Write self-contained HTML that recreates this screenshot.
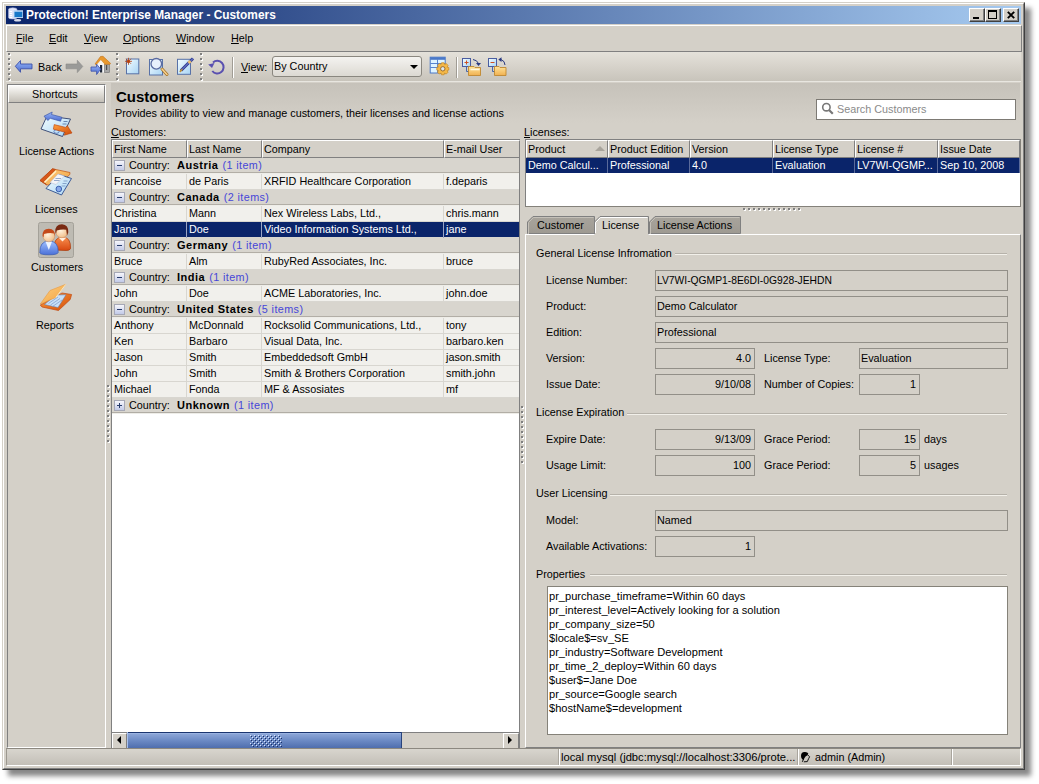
<!DOCTYPE html>
<html><head><meta charset="utf-8">
<style>
html,body{margin:0;padding:0;}
body{width:1039px;height:784px;position:relative;overflow:hidden;background:#fff;font-family:"Liberation Sans",sans-serif;font-size:10.8px;color:#000;}
.a{position:absolute;box-sizing:border-box;}
.t{position:absolute;white-space:pre;line-height:12px;font-size:10.8px;}
.b{font-weight:bold;}
.w{color:#fff;}
.u{text-decoration:underline;}
svg{position:absolute;overflow:visible;}
</style></head><body>
<div class="a" style="left:2px;top:2px;width:1023px;height:768px;background:#d4d0c8;border-left:1px solid #d4d0c8;border-top:1px solid #d4d0c8;border-right:1px solid #404040;border-bottom:1px solid #404040;box-shadow:6px 6px 5px rgba(0,0,0,0.47);"></div>
<div class="a" style="left:3px;top:3px;width:1021px;height:766px;border-left:1px solid #fff;border-top:1px solid #fff;border-right:1px solid #808080;border-bottom:1px solid #808080;"></div>
<div class="a" style="left:6px;top:6px;width:1015px;height:18px;background:linear-gradient(to right,#0a246a,#a6caf0);"></div>
<div class="t b w" style="left:26px;top:9px;font-size:11.9px;">Protection! Enterprise Manager - Customers</div>
<div class="a" style="left:969px;top:8px;width:16px;height:14px;background:#d4d0c8;border-top:1px solid #fff;border-left:1px solid #fff;border-right:1px solid #404040;border-bottom:1px solid #404040;box-shadow:inset -1px -1px 0 #808080;"></div>
<div class="a" style="left:985px;top:8px;width:16px;height:14px;background:#d4d0c8;border-top:1px solid #fff;border-left:1px solid #fff;border-right:1px solid #404040;border-bottom:1px solid #404040;box-shadow:inset -1px -1px 0 #808080;"></div>
<div class="a" style="left:1003px;top:8px;width:16px;height:14px;background:#d4d0c8;border-top:1px solid #fff;border-left:1px solid #fff;border-right:1px solid #404040;border-bottom:1px solid #404040;box-shadow:inset -1px -1px 0 #808080;"></div>
<div class="a" style="left:973px;top:17px;width:6px;height:2px;background:#000;"></div>
<div class="a" style="left:988px;top:10px;width:9px;height:9px;border:1px solid #000;border-top-width:2px;"></div>
<svg style="left:1007px;top:11px" width="8" height="8"><path d="M0.8 0.8 L7.2 7.2 M7.2 0.8 L0.8 7.2" stroke="#000" stroke-width="1.9"/></svg>
<div class="a" style="left:6px;top:25px;width:1016px;height:27px;background:#d4d0c8;border-top:1px solid #fff;border-left:1px solid #fff;border-right:1px solid #808080;border-bottom:1px solid #808080;"></div>
<div class="t " style="left:16px;top:32px;"><u>F</u>ile</div>
<div class="t " style="left:49px;top:32px;"><u>E</u>dit</div>
<div class="t " style="left:84px;top:32px;"><u>V</u>iew</div>
<div class="t " style="left:123px;top:32px;"><u>O</u>ptions</div>
<div class="t " style="left:176px;top:32px;"><u>W</u>indow</div>
<div class="t " style="left:231px;top:32px;"><u>H</u>elp</div>
<div class="a" style="left:6px;top:52px;width:1015px;height:30px;background:linear-gradient(to bottom,#e4e1da 0%,#d8d4cc 45%,#c8c4bb 100%);border-bottom:1px solid #e8e6e0;"></div>
<div class="a" style="left:8px;top:53px;width:2px;height:2px;background:#808080;box-shadow:1px 1px 0 #fff;"></div>
<div class="a" style="left:8px;top:58px;width:2px;height:2px;background:#808080;box-shadow:1px 1px 0 #fff;"></div>
<div class="a" style="left:8px;top:63px;width:2px;height:2px;background:#808080;box-shadow:1px 1px 0 #fff;"></div>
<div class="a" style="left:8px;top:68px;width:2px;height:2px;background:#808080;box-shadow:1px 1px 0 #fff;"></div>
<div class="a" style="left:8px;top:73px;width:2px;height:2px;background:#808080;box-shadow:1px 1px 0 #fff;"></div>
<div class="a" style="left:8px;top:78px;width:2px;height:2px;background:#808080;box-shadow:1px 1px 0 #fff;"></div>
<div class="a" style="left:116px;top:53px;width:2px;height:2px;background:#808080;box-shadow:1px 1px 0 #fff;"></div>
<div class="a" style="left:116px;top:58px;width:2px;height:2px;background:#808080;box-shadow:1px 1px 0 #fff;"></div>
<div class="a" style="left:116px;top:63px;width:2px;height:2px;background:#808080;box-shadow:1px 1px 0 #fff;"></div>
<div class="a" style="left:116px;top:68px;width:2px;height:2px;background:#808080;box-shadow:1px 1px 0 #fff;"></div>
<div class="a" style="left:116px;top:73px;width:2px;height:2px;background:#808080;box-shadow:1px 1px 0 #fff;"></div>
<div class="a" style="left:116px;top:78px;width:2px;height:2px;background:#808080;box-shadow:1px 1px 0 #fff;"></div>
<div class="a" style="left:200px;top:53px;width:2px;height:2px;background:#808080;box-shadow:1px 1px 0 #fff;"></div>
<div class="a" style="left:200px;top:58px;width:2px;height:2px;background:#808080;box-shadow:1px 1px 0 #fff;"></div>
<div class="a" style="left:200px;top:63px;width:2px;height:2px;background:#808080;box-shadow:1px 1px 0 #fff;"></div>
<div class="a" style="left:200px;top:68px;width:2px;height:2px;background:#808080;box-shadow:1px 1px 0 #fff;"></div>
<div class="a" style="left:200px;top:73px;width:2px;height:2px;background:#808080;box-shadow:1px 1px 0 #fff;"></div>
<div class="a" style="left:200px;top:78px;width:2px;height:2px;background:#808080;box-shadow:1px 1px 0 #fff;"></div>
<div class="t " style="left:38px;top:61px;">Back</div>
<div class="a" style="left:232px;top:57px;width:1px;height:21px;background:#a09c94;box-shadow:1px 0 0 #fff;"></div>
<div class="t " style="left:241px;top:61px;"><u>V</u>iew:</div>
<div class="a" style="left:272px;top:56px;width:150px;height:21px;background:linear-gradient(to bottom,#f4f3f0,#dcd9d2);border:1px solid #8a877f;border-radius:3px;"></div>
<div class="t " style="left:274px;top:60px;">By Country</div>
<svg style="left:410px;top:65px" width="8" height="4"><path d="M0 0 H8 L4 4 Z" fill="#000"/></svg>
<div class="a" style="left:456px;top:57px;width:1px;height:21px;background:#a09c94;box-shadow:1px 0 0 #fff;"></div>
<div class="a" style="left:7px;top:84px;width:99px;height:664px;background:#d4d0c8;border-left:1px solid #808080;border-top:1px solid #808080;border-right:1px solid #fff;border-bottom:1px solid #fff;"></div>
<div class="a" style="left:8px;top:85px;width:97px;height:18px;background:linear-gradient(to bottom,#fbfaf8,#dad7d0 60%,#c4c0b8);border-right:1px solid #808080;border-bottom:1px solid #808080;border-top:1px solid #fff;border-left:1px solid #fff;"></div>
<div class="t " style="left:32px;top:88px;">Shortcuts</div>
<div class="t " style="left:19px;top:145px;">License Actions</div>
<div class="t " style="left:35px;top:203px;">Licenses</div>
<div class="t " style="left:31px;top:261px;">Customers</div>
<div class="t " style="left:36px;top:319px;">Reports</div>
<div class="a" style="left:111px;top:83px;width:909px;height:40px;background:linear-gradient(to bottom,#c6c2ba,#d4d0c8);"></div>
<div class="t b" style="left:116px;top:91px;font-size:15px;">Customers</div>
<div class="t " style="left:115px;top:107px;">Provides ability to view and manage customers, their licenses and license actions</div>
<div class="a" style="left:816px;top:99px;width:200px;height:21px;background:#fff;border:1px solid #7d7a74;"></div>
<svg style="left:821px;top:102px" width="13" height="13"><circle cx="5.4" cy="5.2" r="3.7" fill="none" stroke="#787878" stroke-width="1.6"/><path d="M8 8 L11.8 11.8" stroke="#787878" stroke-width="2.2" stroke-linecap="butt"/></svg>
<div class="t " style="left:837px;top:103px;color:#8a8a8a;">Search Customers</div>
<div class="t " style="left:111px;top:126px;"><u>C</u>ustomers:</div>
<div class="a" style="left:111px;top:139px;width:409px;height:609px;background:#fff;border-left:1px solid #808080;border-top:1px solid #808080;border-right:1px solid #808080;"></div>
<div class="a" style="left:112px;top:140px;width:75px;height:18px;background:#d4d0c8;border-top:1px solid #fff;border-left:1px solid #fff;border-right:1px solid #808080;border-bottom:1px solid #808080;"></div>
<div class="t " style="left:114px;top:143px;">First Name</div>
<div class="a" style="left:187px;top:140px;width:75px;height:18px;background:#d4d0c8;border-top:1px solid #fff;border-left:1px solid #fff;border-right:1px solid #808080;border-bottom:1px solid #808080;"></div>
<div class="t " style="left:189px;top:143px;">Last Name</div>
<div class="a" style="left:262px;top:140px;width:182px;height:18px;background:#d4d0c8;border-top:1px solid #fff;border-left:1px solid #fff;border-right:1px solid #808080;border-bottom:1px solid #808080;"></div>
<div class="t " style="left:264px;top:143px;">Company</div>
<div class="a" style="left:444px;top:140px;width:76px;height:18px;background:#d4d0c8;border-top:1px solid #fff;border-left:1px solid #fff;border-right:1px solid #808080;border-bottom:1px solid #808080;"></div>
<div class="t " style="left:446px;top:143px;">E-mail User</div>
<div class="a" style="left:112px;top:158px;width:407px;height:16px;background:#d8d5ce;border-bottom:1px solid #eeede8;"></div>
<div class="a" style="left:112px;top:172px;width:407px;height:1px;background:#b2aea6;"></div>
<div class="a" style="left:114px;top:160px;width:11px;height:11px;background:linear-gradient(to bottom,#f6f6fc,#c2cae8);border:1px solid #a6a8b6;"></div>
<div class="a" style="left:117px;top:165px;width:5px;height:1px;background:#283c6c;"></div>
<div class="t " style="left:129px;top:159px;">Country:</div>
<div class="t " style="left:177px;top:159px;"><b style="font-size:11px;letter-spacing:0.5px">Austria</b><span style="margin-left:4px;color:#4646d8;font-size:10.8px;letter-spacing:0.4px">(1 item)</span></div>
<div class="a" style="left:112px;top:174px;width:407px;height:16px;background:#f1f0ec;border-bottom:1px solid #d8d6d0;"></div>
<div class="a" style="left:186px;top:174px;width:1px;height:16px;background:#d8d6d0;"></div>
<div class="t " style="left:114px;top:175px;">Francoise</div>
<div class="a" style="left:261px;top:174px;width:1px;height:16px;background:#d8d6d0;"></div>
<div class="t " style="left:189px;top:175px;">de Paris</div>
<div class="a" style="left:443px;top:174px;width:1px;height:16px;background:#d8d6d0;"></div>
<div class="t " style="left:264px;top:175px;">XRFID Healthcare Corporation</div>
<div class="t " style="left:446px;top:175px;">f.deparis</div>
<div class="a" style="left:112px;top:190px;width:407px;height:16px;background:#d8d5ce;border-bottom:1px solid #eeede8;"></div>
<div class="a" style="left:112px;top:204px;width:407px;height:1px;background:#b2aea6;"></div>
<div class="a" style="left:114px;top:192px;width:11px;height:11px;background:linear-gradient(to bottom,#f6f6fc,#c2cae8);border:1px solid #a6a8b6;"></div>
<div class="a" style="left:117px;top:197px;width:5px;height:1px;background:#283c6c;"></div>
<div class="t " style="left:129px;top:191px;">Country:</div>
<div class="t " style="left:177px;top:191px;"><b style="font-size:11px;letter-spacing:0.5px">Canada</b><span style="margin-left:4px;color:#4646d8;font-size:10.8px;letter-spacing:0.4px">(2 items)</span></div>
<div class="a" style="left:112px;top:206px;width:407px;height:16px;background:#f1f0ec;border-bottom:1px solid #d8d6d0;"></div>
<div class="a" style="left:186px;top:206px;width:1px;height:16px;background:#d8d6d0;"></div>
<div class="t " style="left:114px;top:207px;">Christina</div>
<div class="a" style="left:261px;top:206px;width:1px;height:16px;background:#d8d6d0;"></div>
<div class="t " style="left:189px;top:207px;">Mann</div>
<div class="a" style="left:443px;top:206px;width:1px;height:16px;background:#d8d6d0;"></div>
<div class="t " style="left:264px;top:207px;">Nex Wireless Labs, Ltd.,</div>
<div class="t " style="left:446px;top:207px;">chris.mann</div>
<div class="a" style="left:112px;top:222px;width:407px;height:16px;background:#0a246a;border-bottom:1px solid #d8d6d0;"></div>
<div class="a" style="left:186px;top:222px;width:1px;height:16px;background:#9aa4c4;"></div>
<div class="t w" style="left:114px;top:223px;">Jane</div>
<div class="a" style="left:261px;top:222px;width:1px;height:16px;background:#9aa4c4;"></div>
<div class="t w" style="left:189px;top:223px;">Doe</div>
<div class="a" style="left:443px;top:222px;width:1px;height:16px;background:#9aa4c4;"></div>
<div class="t w" style="left:264px;top:223px;">Video Information Systems Ltd.,</div>
<div class="t w" style="left:446px;top:223px;">jane</div>
<div class="a" style="left:112px;top:238px;width:407px;height:16px;background:#d8d5ce;border-bottom:1px solid #eeede8;"></div>
<div class="a" style="left:112px;top:252px;width:407px;height:1px;background:#b2aea6;"></div>
<div class="a" style="left:114px;top:240px;width:11px;height:11px;background:linear-gradient(to bottom,#f6f6fc,#c2cae8);border:1px solid #a6a8b6;"></div>
<div class="a" style="left:117px;top:245px;width:5px;height:1px;background:#283c6c;"></div>
<div class="t " style="left:129px;top:239px;">Country:</div>
<div class="t " style="left:177px;top:239px;"><b style="font-size:11px;letter-spacing:0.5px">Germany</b><span style="margin-left:4px;color:#4646d8;font-size:10.8px;letter-spacing:0.4px">(1 item)</span></div>
<div class="a" style="left:112px;top:254px;width:407px;height:16px;background:#f1f0ec;border-bottom:1px solid #d8d6d0;"></div>
<div class="a" style="left:186px;top:254px;width:1px;height:16px;background:#d8d6d0;"></div>
<div class="t " style="left:114px;top:255px;">Bruce</div>
<div class="a" style="left:261px;top:254px;width:1px;height:16px;background:#d8d6d0;"></div>
<div class="t " style="left:189px;top:255px;">Alm</div>
<div class="a" style="left:443px;top:254px;width:1px;height:16px;background:#d8d6d0;"></div>
<div class="t " style="left:264px;top:255px;">RubyRed Associates, Inc.</div>
<div class="t " style="left:446px;top:255px;">bruce</div>
<div class="a" style="left:112px;top:270px;width:407px;height:16px;background:#d8d5ce;border-bottom:1px solid #eeede8;"></div>
<div class="a" style="left:112px;top:284px;width:407px;height:1px;background:#b2aea6;"></div>
<div class="a" style="left:114px;top:272px;width:11px;height:11px;background:linear-gradient(to bottom,#f6f6fc,#c2cae8);border:1px solid #a6a8b6;"></div>
<div class="a" style="left:117px;top:277px;width:5px;height:1px;background:#283c6c;"></div>
<div class="t " style="left:129px;top:271px;">Country:</div>
<div class="t " style="left:177px;top:271px;"><b style="font-size:11px;letter-spacing:0.5px">India</b><span style="margin-left:4px;color:#4646d8;font-size:10.8px;letter-spacing:0.4px">(1 item)</span></div>
<div class="a" style="left:112px;top:286px;width:407px;height:16px;background:#f1f0ec;border-bottom:1px solid #d8d6d0;"></div>
<div class="a" style="left:186px;top:286px;width:1px;height:16px;background:#d8d6d0;"></div>
<div class="t " style="left:114px;top:287px;">John</div>
<div class="a" style="left:261px;top:286px;width:1px;height:16px;background:#d8d6d0;"></div>
<div class="t " style="left:189px;top:287px;">Doe</div>
<div class="a" style="left:443px;top:286px;width:1px;height:16px;background:#d8d6d0;"></div>
<div class="t " style="left:264px;top:287px;">ACME Laboratories, Inc.</div>
<div class="t " style="left:446px;top:287px;">john.doe</div>
<div class="a" style="left:112px;top:302px;width:407px;height:16px;background:#d8d5ce;border-bottom:1px solid #eeede8;"></div>
<div class="a" style="left:112px;top:316px;width:407px;height:1px;background:#b2aea6;"></div>
<div class="a" style="left:114px;top:304px;width:11px;height:11px;background:linear-gradient(to bottom,#f6f6fc,#c2cae8);border:1px solid #a6a8b6;"></div>
<div class="a" style="left:117px;top:309px;width:5px;height:1px;background:#283c6c;"></div>
<div class="t " style="left:129px;top:303px;">Country:</div>
<div class="t " style="left:177px;top:303px;"><b style="font-size:11px;letter-spacing:0.5px">United States</b><span style="margin-left:4px;color:#4646d8;font-size:10.8px;letter-spacing:0.4px">(5 items)</span></div>
<div class="a" style="left:112px;top:318px;width:407px;height:16px;background:#f1f0ec;border-bottom:1px solid #d8d6d0;"></div>
<div class="a" style="left:186px;top:318px;width:1px;height:16px;background:#d8d6d0;"></div>
<div class="t " style="left:114px;top:319px;">Anthony</div>
<div class="a" style="left:261px;top:318px;width:1px;height:16px;background:#d8d6d0;"></div>
<div class="t " style="left:189px;top:319px;">McDonnald</div>
<div class="a" style="left:443px;top:318px;width:1px;height:16px;background:#d8d6d0;"></div>
<div class="t " style="left:264px;top:319px;">Rocksolid Communications, Ltd.,</div>
<div class="t " style="left:446px;top:319px;">tony</div>
<div class="a" style="left:112px;top:334px;width:407px;height:16px;background:#f1f0ec;border-bottom:1px solid #d8d6d0;"></div>
<div class="a" style="left:186px;top:334px;width:1px;height:16px;background:#d8d6d0;"></div>
<div class="t " style="left:114px;top:335px;">Ken</div>
<div class="a" style="left:261px;top:334px;width:1px;height:16px;background:#d8d6d0;"></div>
<div class="t " style="left:189px;top:335px;">Barbaro</div>
<div class="a" style="left:443px;top:334px;width:1px;height:16px;background:#d8d6d0;"></div>
<div class="t " style="left:264px;top:335px;">Visual Data, Inc.</div>
<div class="t " style="left:446px;top:335px;">barbaro.ken</div>
<div class="a" style="left:112px;top:350px;width:407px;height:16px;background:#f1f0ec;border-bottom:1px solid #d8d6d0;"></div>
<div class="a" style="left:186px;top:350px;width:1px;height:16px;background:#d8d6d0;"></div>
<div class="t " style="left:114px;top:351px;">Jason</div>
<div class="a" style="left:261px;top:350px;width:1px;height:16px;background:#d8d6d0;"></div>
<div class="t " style="left:189px;top:351px;">Smith</div>
<div class="a" style="left:443px;top:350px;width:1px;height:16px;background:#d8d6d0;"></div>
<div class="t " style="left:264px;top:351px;">Embeddedsoft GmbH</div>
<div class="t " style="left:446px;top:351px;">jason.smith</div>
<div class="a" style="left:112px;top:366px;width:407px;height:16px;background:#f1f0ec;border-bottom:1px solid #d8d6d0;"></div>
<div class="a" style="left:186px;top:366px;width:1px;height:16px;background:#d8d6d0;"></div>
<div class="t " style="left:114px;top:367px;">John</div>
<div class="a" style="left:261px;top:366px;width:1px;height:16px;background:#d8d6d0;"></div>
<div class="t " style="left:189px;top:367px;">Smith</div>
<div class="a" style="left:443px;top:366px;width:1px;height:16px;background:#d8d6d0;"></div>
<div class="t " style="left:264px;top:367px;">Smith &amp; Brothers Corporation</div>
<div class="t " style="left:446px;top:367px;">smith.john</div>
<div class="a" style="left:112px;top:382px;width:407px;height:16px;background:#f1f0ec;border-bottom:1px solid #d8d6d0;"></div>
<div class="a" style="left:186px;top:382px;width:1px;height:16px;background:#d8d6d0;"></div>
<div class="t " style="left:114px;top:383px;">Michael</div>
<div class="a" style="left:261px;top:382px;width:1px;height:16px;background:#d8d6d0;"></div>
<div class="t " style="left:189px;top:383px;">Fonda</div>
<div class="a" style="left:443px;top:382px;width:1px;height:16px;background:#d8d6d0;"></div>
<div class="t " style="left:264px;top:383px;">MF &amp; Assosiates</div>
<div class="t " style="left:446px;top:383px;">mf</div>
<div class="a" style="left:112px;top:398px;width:407px;height:16px;background:#d8d5ce;border-bottom:1px solid #eeede8;"></div>
<div class="a" style="left:112px;top:412px;width:407px;height:1px;background:#b2aea6;"></div>
<div class="a" style="left:114px;top:400px;width:11px;height:11px;background:linear-gradient(to bottom,#f6f6fc,#c2cae8);border:1px solid #a6a8b6;"></div>
<div class="a" style="left:117px;top:405px;width:5px;height:1px;background:#283c6c;"></div>
<div class="a" style="left:119px;top:403px;width:1px;height:5px;background:#283c6c;"></div>
<div class="t " style="left:129px;top:399px;">Country:</div>
<div class="t " style="left:177px;top:399px;"><b style="font-size:11px;letter-spacing:0.5px">Unknown</b><span style="margin-left:4px;color:#4646d8;font-size:10.8px;letter-spacing:0.4px">(1 item)</span></div>
<div class="a" style="left:112px;top:732px;width:407px;height:16px;background:#d4d0c8;border-top:1px solid #808080;"></div>
<div class="a" style="left:112px;top:733px;width:15px;height:15px;background:#d4d0c8;border-top:1px solid #fff;border-left:1px solid #fff;border-right:1px solid #808080;"></div>
<svg style="left:117px;top:736px" width="4" height="8"><path d="M4 0 V8 L0 4 Z" fill="#000"/></svg>
<div class="a" style="left:127px;top:732px;width:275px;height:16px;background:linear-gradient(to bottom,#1a3570 0,#1a3570 1px,#a8c0ec 1px,#8aa4d6 2px,#6e8cc6 50%,#4f6eae 100%);border-left:1px solid #a8c0ec;border-right:1px solid #29447c;"></div>
<div class="a" style="left:503px;top:733px;width:16px;height:15px;background:#d4d0c8;border-top:1px solid #fff;border-left:1px solid #fff;border-right:1px solid #808080;"></div>
<svg style="left:508px;top:736px" width="4" height="8"><path d="M0 0 V8 L4 4 Z" fill="#000"/></svg>
<div class="a" style="left:250px;top:735px;width:1px;height:1px;background:#dbe6ff;box-shadow:1px 1px 0 #1a2f66;"></div>
<div class="a" style="left:252px;top:737px;width:1px;height:1px;background:#dbe6ff;box-shadow:1px 1px 0 #1a2f66;"></div>
<div class="a" style="left:250px;top:739px;width:1px;height:1px;background:#dbe6ff;box-shadow:1px 1px 0 #1a2f66;"></div>
<div class="a" style="left:252px;top:741px;width:1px;height:1px;background:#dbe6ff;box-shadow:1px 1px 0 #1a2f66;"></div>
<div class="a" style="left:250px;top:743px;width:1px;height:1px;background:#dbe6ff;box-shadow:1px 1px 0 #1a2f66;"></div>
<div class="a" style="left:252px;top:745px;width:1px;height:1px;background:#dbe6ff;box-shadow:1px 1px 0 #1a2f66;"></div>
<div class="a" style="left:254px;top:735px;width:1px;height:1px;background:#dbe6ff;box-shadow:1px 1px 0 #1a2f66;"></div>
<div class="a" style="left:256px;top:737px;width:1px;height:1px;background:#dbe6ff;box-shadow:1px 1px 0 #1a2f66;"></div>
<div class="a" style="left:254px;top:739px;width:1px;height:1px;background:#dbe6ff;box-shadow:1px 1px 0 #1a2f66;"></div>
<div class="a" style="left:256px;top:741px;width:1px;height:1px;background:#dbe6ff;box-shadow:1px 1px 0 #1a2f66;"></div>
<div class="a" style="left:254px;top:743px;width:1px;height:1px;background:#dbe6ff;box-shadow:1px 1px 0 #1a2f66;"></div>
<div class="a" style="left:256px;top:745px;width:1px;height:1px;background:#dbe6ff;box-shadow:1px 1px 0 #1a2f66;"></div>
<div class="a" style="left:258px;top:735px;width:1px;height:1px;background:#dbe6ff;box-shadow:1px 1px 0 #1a2f66;"></div>
<div class="a" style="left:260px;top:737px;width:1px;height:1px;background:#dbe6ff;box-shadow:1px 1px 0 #1a2f66;"></div>
<div class="a" style="left:258px;top:739px;width:1px;height:1px;background:#dbe6ff;box-shadow:1px 1px 0 #1a2f66;"></div>
<div class="a" style="left:260px;top:741px;width:1px;height:1px;background:#dbe6ff;box-shadow:1px 1px 0 #1a2f66;"></div>
<div class="a" style="left:258px;top:743px;width:1px;height:1px;background:#dbe6ff;box-shadow:1px 1px 0 #1a2f66;"></div>
<div class="a" style="left:260px;top:745px;width:1px;height:1px;background:#dbe6ff;box-shadow:1px 1px 0 #1a2f66;"></div>
<div class="a" style="left:262px;top:735px;width:1px;height:1px;background:#dbe6ff;box-shadow:1px 1px 0 #1a2f66;"></div>
<div class="a" style="left:264px;top:737px;width:1px;height:1px;background:#dbe6ff;box-shadow:1px 1px 0 #1a2f66;"></div>
<div class="a" style="left:262px;top:739px;width:1px;height:1px;background:#dbe6ff;box-shadow:1px 1px 0 #1a2f66;"></div>
<div class="a" style="left:264px;top:741px;width:1px;height:1px;background:#dbe6ff;box-shadow:1px 1px 0 #1a2f66;"></div>
<div class="a" style="left:262px;top:743px;width:1px;height:1px;background:#dbe6ff;box-shadow:1px 1px 0 #1a2f66;"></div>
<div class="a" style="left:264px;top:745px;width:1px;height:1px;background:#dbe6ff;box-shadow:1px 1px 0 #1a2f66;"></div>
<div class="a" style="left:266px;top:735px;width:1px;height:1px;background:#dbe6ff;box-shadow:1px 1px 0 #1a2f66;"></div>
<div class="a" style="left:268px;top:737px;width:1px;height:1px;background:#dbe6ff;box-shadow:1px 1px 0 #1a2f66;"></div>
<div class="a" style="left:266px;top:739px;width:1px;height:1px;background:#dbe6ff;box-shadow:1px 1px 0 #1a2f66;"></div>
<div class="a" style="left:268px;top:741px;width:1px;height:1px;background:#dbe6ff;box-shadow:1px 1px 0 #1a2f66;"></div>
<div class="a" style="left:266px;top:743px;width:1px;height:1px;background:#dbe6ff;box-shadow:1px 1px 0 #1a2f66;"></div>
<div class="a" style="left:268px;top:745px;width:1px;height:1px;background:#dbe6ff;box-shadow:1px 1px 0 #1a2f66;"></div>
<div class="a" style="left:270px;top:735px;width:1px;height:1px;background:#dbe6ff;box-shadow:1px 1px 0 #1a2f66;"></div>
<div class="a" style="left:272px;top:737px;width:1px;height:1px;background:#dbe6ff;box-shadow:1px 1px 0 #1a2f66;"></div>
<div class="a" style="left:270px;top:739px;width:1px;height:1px;background:#dbe6ff;box-shadow:1px 1px 0 #1a2f66;"></div>
<div class="a" style="left:272px;top:741px;width:1px;height:1px;background:#dbe6ff;box-shadow:1px 1px 0 #1a2f66;"></div>
<div class="a" style="left:270px;top:743px;width:1px;height:1px;background:#dbe6ff;box-shadow:1px 1px 0 #1a2f66;"></div>
<div class="a" style="left:272px;top:745px;width:1px;height:1px;background:#dbe6ff;box-shadow:1px 1px 0 #1a2f66;"></div>
<div class="a" style="left:274px;top:735px;width:1px;height:1px;background:#dbe6ff;box-shadow:1px 1px 0 #1a2f66;"></div>
<div class="a" style="left:276px;top:737px;width:1px;height:1px;background:#dbe6ff;box-shadow:1px 1px 0 #1a2f66;"></div>
<div class="a" style="left:274px;top:739px;width:1px;height:1px;background:#dbe6ff;box-shadow:1px 1px 0 #1a2f66;"></div>
<div class="a" style="left:276px;top:741px;width:1px;height:1px;background:#dbe6ff;box-shadow:1px 1px 0 #1a2f66;"></div>
<div class="a" style="left:274px;top:743px;width:1px;height:1px;background:#dbe6ff;box-shadow:1px 1px 0 #1a2f66;"></div>
<div class="a" style="left:276px;top:745px;width:1px;height:1px;background:#dbe6ff;box-shadow:1px 1px 0 #1a2f66;"></div>
<div class="a" style="left:278px;top:735px;width:1px;height:1px;background:#dbe6ff;box-shadow:1px 1px 0 #1a2f66;"></div>
<div class="a" style="left:280px;top:737px;width:1px;height:1px;background:#dbe6ff;box-shadow:1px 1px 0 #1a2f66;"></div>
<div class="a" style="left:278px;top:739px;width:1px;height:1px;background:#dbe6ff;box-shadow:1px 1px 0 #1a2f66;"></div>
<div class="a" style="left:280px;top:741px;width:1px;height:1px;background:#dbe6ff;box-shadow:1px 1px 0 #1a2f66;"></div>
<div class="a" style="left:278px;top:743px;width:1px;height:1px;background:#dbe6ff;box-shadow:1px 1px 0 #1a2f66;"></div>
<div class="a" style="left:280px;top:745px;width:1px;height:1px;background:#dbe6ff;box-shadow:1px 1px 0 #1a2f66;"></div>
<div class="a" style="left:107px;top:385px;width:2px;height:2px;background:#808080;box-shadow:1px 1px 0 #fff;"></div>
<div class="a" style="left:107px;top:390px;width:2px;height:2px;background:#808080;box-shadow:1px 1px 0 #fff;"></div>
<div class="a" style="left:107px;top:395px;width:2px;height:2px;background:#808080;box-shadow:1px 1px 0 #fff;"></div>
<div class="a" style="left:107px;top:400px;width:2px;height:2px;background:#808080;box-shadow:1px 1px 0 #fff;"></div>
<div class="a" style="left:107px;top:405px;width:2px;height:2px;background:#808080;box-shadow:1px 1px 0 #fff;"></div>
<div class="a" style="left:107px;top:410px;width:2px;height:2px;background:#808080;box-shadow:1px 1px 0 #fff;"></div>
<div class="a" style="left:107px;top:415px;width:2px;height:2px;background:#808080;box-shadow:1px 1px 0 #fff;"></div>
<div class="a" style="left:107px;top:420px;width:2px;height:2px;background:#808080;box-shadow:1px 1px 0 #fff;"></div>
<div class="a" style="left:107px;top:425px;width:2px;height:2px;background:#808080;box-shadow:1px 1px 0 #fff;"></div>
<div class="a" style="left:107px;top:430px;width:2px;height:2px;background:#808080;box-shadow:1px 1px 0 #fff;"></div>
<div class="a" style="left:107px;top:435px;width:2px;height:2px;background:#808080;box-shadow:1px 1px 0 #fff;"></div>
<div class="a" style="left:107px;top:440px;width:2px;height:2px;background:#808080;box-shadow:1px 1px 0 #fff;"></div>
<div class="a" style="left:521px;top:406px;width:2px;height:2px;background:#808080;box-shadow:1px 1px 0 #fff;"></div>
<div class="a" style="left:521px;top:411px;width:2px;height:2px;background:#808080;box-shadow:1px 1px 0 #fff;"></div>
<div class="a" style="left:521px;top:416px;width:2px;height:2px;background:#808080;box-shadow:1px 1px 0 #fff;"></div>
<div class="a" style="left:521px;top:421px;width:2px;height:2px;background:#808080;box-shadow:1px 1px 0 #fff;"></div>
<div class="a" style="left:521px;top:426px;width:2px;height:2px;background:#808080;box-shadow:1px 1px 0 #fff;"></div>
<div class="a" style="left:521px;top:431px;width:2px;height:2px;background:#808080;box-shadow:1px 1px 0 #fff;"></div>
<div class="a" style="left:521px;top:436px;width:2px;height:2px;background:#808080;box-shadow:1px 1px 0 #fff;"></div>
<div class="a" style="left:521px;top:441px;width:2px;height:2px;background:#808080;box-shadow:1px 1px 0 #fff;"></div>
<div class="a" style="left:521px;top:446px;width:2px;height:2px;background:#808080;box-shadow:1px 1px 0 #fff;"></div>
<div class="a" style="left:521px;top:451px;width:2px;height:2px;background:#808080;box-shadow:1px 1px 0 #fff;"></div>
<div class="a" style="left:521px;top:456px;width:2px;height:2px;background:#808080;box-shadow:1px 1px 0 #fff;"></div>
<div class="a" style="left:521px;top:461px;width:2px;height:2px;background:#808080;box-shadow:1px 1px 0 #fff;"></div>
<div class="t " style="left:524px;top:126px;"><u>L</u>icenses:</div>
<div class="a" style="left:525px;top:139px;width:496px;height:68px;background:#fff;border-left:1px solid #808080;border-top:1px solid #808080;border-right:1px solid #84817a;border-bottom:1px solid #84817a;"></div>
<div class="a" style="left:526px;top:140px;width:82px;height:18px;background:#d4d0c8;border-top:1px solid #fff;border-left:1px solid #fff;border-right:1px solid #808080;border-bottom:1px solid #808080;"></div>
<div class="t " style="left:528px;top:143px;">Product</div>
<div class="a" style="left:608px;top:140px;width:82px;height:18px;background:#d4d0c8;border-top:1px solid #fff;border-left:1px solid #fff;border-right:1px solid #808080;border-bottom:1px solid #808080;"></div>
<div class="t " style="left:610px;top:143px;">Product Edition</div>
<div class="a" style="left:690px;top:140px;width:83px;height:18px;background:#d4d0c8;border-top:1px solid #fff;border-left:1px solid #fff;border-right:1px solid #808080;border-bottom:1px solid #808080;"></div>
<div class="t " style="left:692px;top:143px;">Version</div>
<div class="a" style="left:773px;top:140px;width:82px;height:18px;background:#d4d0c8;border-top:1px solid #fff;border-left:1px solid #fff;border-right:1px solid #808080;border-bottom:1px solid #808080;"></div>
<div class="t " style="left:775px;top:143px;">License Type</div>
<div class="a" style="left:855px;top:140px;width:83px;height:18px;background:#d4d0c8;border-top:1px solid #fff;border-left:1px solid #fff;border-right:1px solid #808080;border-bottom:1px solid #808080;"></div>
<div class="t " style="left:857px;top:143px;">License #</div>
<div class="a" style="left:938px;top:140px;width:82px;height:18px;background:#d4d0c8;border-top:1px solid #fff;border-left:1px solid #fff;border-right:1px solid #808080;border-bottom:1px solid #808080;"></div>
<div class="t " style="left:940px;top:143px;">Issue Date</div>
<div class="a" style="left:526px;top:158px;width:494px;height:15px;background:#0a246a;"></div>
<div class="a" style="left:607px;top:158px;width:1px;height:15px;background:#5a6a9a;"></div>
<div class="t w" style="left:528px;top:159px;">Demo Calcul...</div>
<div class="a" style="left:689px;top:158px;width:1px;height:15px;background:#5a6a9a;"></div>
<div class="t w" style="left:610px;top:159px;">Professional</div>
<div class="a" style="left:772px;top:158px;width:1px;height:15px;background:#5a6a9a;"></div>
<div class="t w" style="left:692px;top:159px;">4.0</div>
<div class="a" style="left:854px;top:158px;width:1px;height:15px;background:#5a6a9a;"></div>
<div class="t w" style="left:775px;top:159px;">Evaluation</div>
<div class="a" style="left:937px;top:158px;width:1px;height:15px;background:#5a6a9a;"></div>
<div class="t w" style="left:857px;top:159px;">LV7WI-QGMP...</div>
<div class="a" style="left:1019px;top:158px;width:1px;height:15px;background:#5a6a9a;"></div>
<div class="t w" style="left:940px;top:159px;">Sep 10, 2008</div>
<svg style="left:595px;top:146px" width="11" height="5"><path d="M0 5 H10 L5 0 Z" fill="#a8a49c"/></svg>
<div class="a" style="left:743px;top:208px;width:2px;height:2px;background:#808080;box-shadow:1px 1px 0 #fff;"></div>
<div class="a" style="left:748px;top:208px;width:2px;height:2px;background:#808080;box-shadow:1px 1px 0 #fff;"></div>
<div class="a" style="left:753px;top:208px;width:2px;height:2px;background:#808080;box-shadow:1px 1px 0 #fff;"></div>
<div class="a" style="left:758px;top:208px;width:2px;height:2px;background:#808080;box-shadow:1px 1px 0 #fff;"></div>
<div class="a" style="left:763px;top:208px;width:2px;height:2px;background:#808080;box-shadow:1px 1px 0 #fff;"></div>
<div class="a" style="left:768px;top:208px;width:2px;height:2px;background:#808080;box-shadow:1px 1px 0 #fff;"></div>
<div class="a" style="left:773px;top:208px;width:2px;height:2px;background:#808080;box-shadow:1px 1px 0 #fff;"></div>
<div class="a" style="left:778px;top:208px;width:2px;height:2px;background:#808080;box-shadow:1px 1px 0 #fff;"></div>
<div class="a" style="left:783px;top:208px;width:2px;height:2px;background:#808080;box-shadow:1px 1px 0 #fff;"></div>
<div class="a" style="left:788px;top:208px;width:2px;height:2px;background:#808080;box-shadow:1px 1px 0 #fff;"></div>
<div class="a" style="left:793px;top:208px;width:2px;height:2px;background:#808080;box-shadow:1px 1px 0 #fff;"></div>
<div class="a" style="left:798px;top:208px;width:2px;height:2px;background:#808080;box-shadow:1px 1px 0 #fff;"></div>
<div class="a" style="left:525px;top:234px;width:496px;height:514px;background:#d4d0c8;border-left:1px solid #fff;border-top:1px solid #fff;border-right:1px solid #808080;border-bottom:1px solid #808080;"></div>
<svg style="left:527px;top:216px" width="68" height="19"><defs><linearGradient id="tg" x1="0" y1="0" x2="0" y2="1"><stop offset="0" stop-color="#a8a49c"/><stop offset="1" stop-color="#9e9a92"/></linearGradient></defs><polygon points="0.5,17.5 0.5,6 6,0.5 67.5,0.5 67.5,17.5" fill="url(#tg)" stroke="#808080" stroke-width="1"/><polyline points="1.5,18 1.5,6.5 6.5,1.5 66.5,1.5" fill="none" stroke="#c4c0b8" stroke-width="1"/></svg>
<div class="t " style="left:537px;top:219px;">Customer</div>
<svg style="left:649px;top:216px" width="92" height="19"><defs><linearGradient id="tg" x1="0" y1="0" x2="0" y2="1"><stop offset="0" stop-color="#a8a49c"/><stop offset="1" stop-color="#9e9a92"/></linearGradient></defs><polygon points="0.5,17.5 0.5,6 6,0.5 91.5,0.5 91.5,17.5" fill="url(#tg)" stroke="#808080" stroke-width="1"/><polyline points="1.5,18 1.5,6.5 6.5,1.5 90.5,1.5" fill="none" stroke="#c4c0b8" stroke-width="1"/></svg>
<div class="t " style="left:657px;top:219px;">License Actions</div>
<svg style="left:594px;top:216px" width="55" height="19"><defs><linearGradient id="tg" x1="0" y1="0" x2="0" y2="1"><stop offset="0" stop-color="#a8a49c"/><stop offset="1" stop-color="#9e9a92"/></linearGradient></defs><polygon points="0.5,18 0.5,6 6,0.5 54.5,0.5 54.5,18" fill="#d4d0c8" stroke="#808080" stroke-width="1"/><polyline points="1.5,18 1.5,6.5 6.5,1.5 53.5,1.5" fill="none" stroke="#fff" stroke-width="1"/></svg>
<div class="t " style="left:602px;top:219px;">License</div>
<div class="a" style="left:595px;top:233px;width:53px;height:3px;background:#d4d0c8;"></div>
<div class="t " style="left:536px;top:247px;">General License Infromation</div>
<div class="a" style="left:675px;top:253px;width:332px;height:1px;background:#b6b2aa;box-shadow:0 1px 0 #f2f0ea;"></div>
<div class="t " style="left:546px;top:274px;">License Number:</div>
<div class="a" style="left:655px;top:270px;width:353px;height:21px;border:1px solid #928f88;"></div>
<div class="t " style="left:657px;top:274px;"><span style="font-size:10.3px">LV7WI-QGMP1-8E6DI-0G928-JEHDN</span></div>
<div class="t " style="left:546px;top:300px;">Product:</div>
<div class="a" style="left:655px;top:296px;width:353px;height:21px;border:1px solid #928f88;"></div>
<div class="t " style="left:657px;top:300px;">Demo Calculator</div>
<div class="t " style="left:546px;top:326px;">Edition:</div>
<div class="a" style="left:655px;top:322px;width:353px;height:21px;border:1px solid #928f88;"></div>
<div class="t " style="left:657px;top:326px;">Professional</div>
<div class="t " style="left:546px;top:352px;">Version:</div>
<div class="a" style="left:655px;top:348px;width:100px;height:21px;border:1px solid #928f88;"></div>
<div class="t " style="right:288px;top:352px;">4.0</div>
<div class="t " style="left:764px;top:352px;">License Type:</div>
<div class="a" style="left:859px;top:348px;width:149px;height:21px;border:1px solid #928f88;"></div>
<div class="t " style="left:861px;top:352px;">Evaluation</div>
<div class="t " style="left:546px;top:378px;">Issue Date:</div>
<div class="a" style="left:655px;top:374px;width:100px;height:21px;border:1px solid #928f88;"></div>
<div class="t " style="right:288px;top:378px;">9/10/08</div>
<div class="t " style="left:764px;top:378px;">Number of Copies:</div>
<div class="a" style="left:859px;top:374px;width:61px;height:21px;border:1px solid #928f88;"></div>
<div class="t " style="right:123px;top:378px;">1</div>
<div class="t " style="left:536px;top:406px;">License Expiration</div>
<div class="a" style="left:627px;top:413px;width:380px;height:1px;background:#b6b2aa;box-shadow:0 1px 0 #f2f0ea;"></div>
<div class="t " style="left:546px;top:433px;">Expire Date:</div>
<div class="a" style="left:655px;top:429px;width:100px;height:21px;border:1px solid #928f88;"></div>
<div class="t " style="right:288px;top:433px;">9/13/09</div>
<div class="t " style="left:764px;top:433px;">Grace Period:</div>
<div class="a" style="left:859px;top:429px;width:61px;height:21px;border:1px solid #928f88;"></div>
<div class="t " style="right:123px;top:433px;">15</div>
<div class="t " style="left:924px;top:433px;">days</div>
<div class="t " style="left:546px;top:459px;">Usage Limit:</div>
<div class="a" style="left:655px;top:455px;width:100px;height:21px;border:1px solid #928f88;"></div>
<div class="t " style="right:288px;top:459px;">100</div>
<div class="t " style="left:764px;top:459px;">Grace Period:</div>
<div class="a" style="left:859px;top:455px;width:61px;height:21px;border:1px solid #928f88;"></div>
<div class="t " style="right:123px;top:459px;">5</div>
<div class="t " style="left:924px;top:459px;">usages</div>
<div class="t " style="left:536px;top:487px;">User Licensing</div>
<div class="a" style="left:610px;top:494px;width:397px;height:1px;background:#b6b2aa;box-shadow:0 1px 0 #f2f0ea;"></div>
<div class="t " style="left:546px;top:514px;">Model:</div>
<div class="a" style="left:655px;top:510px;width:353px;height:21px;border:1px solid #928f88;"></div>
<div class="t " style="left:657px;top:514px;">Named</div>
<div class="t " style="left:546px;top:540px;">Available Activations:</div>
<div class="a" style="left:655px;top:536px;width:100px;height:21px;border:1px solid #928f88;"></div>
<div class="t " style="right:288px;top:540px;">1</div>
<div class="t " style="left:536px;top:568px;">Properties</div>
<div class="a" style="left:590px;top:574px;width:417px;height:1px;background:#b6b2aa;box-shadow:0 1px 0 #f2f0ea;"></div>
<div class="a" style="left:547px;top:586px;width:461px;height:149px;background:#fff;border:1px solid #858279;"></div>
<div class="t " style="left:549px;top:590px;font-size:11.1px;">pr_purchase_timeframe=Within 60 days</div>
<div class="t " style="left:549px;top:604px;font-size:11.1px;">pr_interest_level=Actively looking for a solution</div>
<div class="t " style="left:549px;top:618px;font-size:11.1px;">pr_company_size=50</div>
<div class="t " style="left:549px;top:632px;font-size:11.1px;">$locale$=sv_SE</div>
<div class="t " style="left:549px;top:646px;font-size:11.1px;">pr_industry=Software Development</div>
<div class="t " style="left:549px;top:660px;font-size:11.1px;">pr_time_2_deploy=Within 60 days</div>
<div class="t " style="left:549px;top:674px;font-size:11.1px;">$user$=Jane Doe</div>
<div class="t " style="left:549px;top:688px;font-size:11.1px;">pr_source=Google search</div>
<div class="t " style="left:549px;top:702px;font-size:11.1px;">$hostName$=development</div>
<div class="a" style="left:6px;top:748px;width:1015px;height:18px;background:linear-gradient(to bottom,#d8d5ce,#c3bfb7);border-top:1px solid #8c8880;border-left:1px solid #9c988f;border-bottom:1px solid #fff;border-right:1px solid #fff;"></div>
<div class="a" style="left:558px;top:749px;width:1px;height:16px;background:#a9a59d;box-shadow:1px 0 0 #fff;"></div>
<div class="a" style="left:797px;top:749px;width:1px;height:16px;background:#a9a59d;box-shadow:1px 0 0 #fff;"></div>
<div class="a" style="left:951px;top:749px;width:1px;height:16px;background:#a9a59d;box-shadow:1px 0 0 #fff;"></div>
<div class="t " style="left:561px;top:751px;font-size:11.2px;">local mysql (jdbc:mysql://localhost:3306/prote...</div>
<div class="t " style="left:815px;top:751px;">admin (Admin)</div>
<svg width="0" height="0" style="position:absolute"><defs>
<linearGradient id="gBlue" x1="0" y1="0" x2="0" y2="1"><stop offset="0" stop-color="#9ab8f8"/><stop offset="1" stop-color="#4a6ad0"/></linearGradient>
<linearGradient id="gDoc" x1="0" y1="0" x2="1" y2="1"><stop offset="0" stop-color="#f4fdff"/><stop offset="1" stop-color="#a8d4f4"/></linearGradient>
<linearGradient id="gOr" x1="0" y1="0" x2="1" y2="1"><stop offset="0" stop-color="#ffa040"/><stop offset="1" stop-color="#d04a08"/></linearGradient>
<linearGradient id="gOrL" x1="0" y1="0" x2="1" y2="1"><stop offset="0" stop-color="#ffd080"/><stop offset="1" stop-color="#f0a040"/></linearGradient>
<linearGradient id="gFold" x1="0" y1="0" x2="0" y2="1"><stop offset="0" stop-color="#ffe49a"/><stop offset="1" stop-color="#f0b050"/></linearGradient>
<radialGradient id="gFace" cx="0.4" cy="0.4" r="0.7"><stop offset="0" stop-color="#fff4e0"/><stop offset="1" stop-color="#f0b880"/></radialGradient>
<linearGradient id="gBodyB" x1="0" y1="0" x2="0" y2="1"><stop offset="0" stop-color="#a0c0ff"/><stop offset="1" stop-color="#4a70d8"/></linearGradient>
<linearGradient id="gBodyO" x1="0" y1="0" x2="0" y2="1"><stop offset="0" stop-color="#f89050"/><stop offset="1" stop-color="#d84810"/></linearGradient>
</defs></svg>
<svg style="left:8px;top:7px" width="16" height="16" viewBox="0 0 16 16">
<path d="M0.5 2.5 Q0.5 0.8 4.8 0.8 Q9 0.8 9 2.5 V10.5 Q9 12 4.8 12 Q0.5 12 0.5 10.5 Z" fill="#dfe4f8" stroke="#a8b0d8" stroke-width="0.6"/>
<path d="M1.5 4.5 H4 M1.5 6.5 H4 M1.5 8.5 H4 M1.5 10.5 H4" stroke="#ffffff" stroke-width="1"/>
<rect x="5.7" y="3.2" width="9.3" height="7.8" fill="#b8d4f4"/>
<rect x="6.5" y="4.8" width="7.8" height="5.2" fill="#1878c8"/>
<ellipse cx="9.6" cy="13.2" rx="3.6" ry="1.3" fill="#d8dcec"/>
</svg>
<svg style="left:12px;top:54px" width="24" height="24" viewBox="0 0 24 24"><path d="M3.3 12.3 L8.5 6.5 L8.5 10 L20 10 L20 14.8 L8.5 14.8 L8.5 18.3 Z" fill="url(#gBlue)" stroke="#3c50a8" stroke-width="0.9"/></svg>
<svg style="left:62px;top:54px" width="24" height="24" viewBox="0 0 24 24"><path d="M20.8 12.4 L15.3 6.3 L15.3 10 L4 10 L4 14.8 L15.3 14.8 L15.3 18.6 Z" fill="#9a9a98" stroke="#8a8a88" stroke-width="0.6"/></svg>
<svg style="left:88px;top:54px" width="24" height="24" viewBox="0 0 24 24">
<rect x="9" y="9" width="7.5" height="9.5" fill="#f8f8f8"/>
<rect x="16.5" y="10" width="5" height="8.5" fill="#a8a8a8" stroke="#707070" stroke-width="0.6"/>
<rect x="18" y="11" width="1.2" height="5" fill="#505050"/>
<rect x="12" y="11" width="2.2" height="7.5" fill="#202838"/>
<path d="M7 10 L12.5 2.5 L15 2.3 L22.5 9.3 L22 10.3 L16.5 10.3 L12.8 6 L8.5 10.8 Z" fill="#e8982e" stroke="#c07018" stroke-width="0.6"/><path d="M12.8 6 L16.5 10.3 L9 10.3 Z" fill="#f8f4ec"/>
<path d="M12.8 15.2 L8.6 10.2 L8.6 13 L3 13 L3 17.2 L8.6 17.2 L8.6 20.5 Z" fill="url(#gBlue)" stroke="#3c50a8" stroke-width="0.8"/>
</svg>
<svg style="left:122px;top:54px" width="24" height="24" viewBox="0 0 24 24">
<rect x="4.5" y="5" width="12.3" height="14.8" fill="url(#gDoc)" stroke="#5872a8" stroke-width="1"/>
<circle cx="6.5" cy="7.3" r="1.6" fill="#e05010"/>
<path d="M6.5 3.8 V10.8 M3 7.3 H10 M4 4.8 L9 9.8 M9 4.8 L4 9.8" stroke="#b04010" stroke-width="0.8"/>
</svg>
<svg style="left:146px;top:54px" width="24" height="24" viewBox="0 0 24 24">
<rect x="3.5" y="5.5" width="13" height="15.5" fill="url(#gDoc)" stroke="#5872a8" stroke-width="1"/>
<path d="M16 15 L21 20.5" stroke="#a07020" stroke-width="3" stroke-linecap="round"/>
<path d="M16 15 L21 20.5" stroke="#f8d090" stroke-width="1.6" stroke-linecap="round"/>
<circle cx="10.3" cy="9.8" r="5.3" fill="#e8f0fc" stroke="#5a6aa0" stroke-width="1.3"/>
</svg>
<svg style="left:173px;top:54px" width="24" height="24" viewBox="0 0 24 24">
<rect x="4.5" y="5.3" width="13" height="15" fill="url(#gDoc)" stroke="#5872a8" stroke-width="1"/>
<path d="M8 16.5 L20 4.5" stroke="#303c90" stroke-width="3"/>
<path d="M8 16.5 L20 4.5" stroke="#8090e0" stroke-width="1"/>
<path d="M6.8 17.8 L9.2 15.3 L8 16.8 Z" fill="#d0a040" stroke="#c09030" stroke-width="1.5"/>
<path d="M15.5 9 L17.5 7" stroke="#f0c070" stroke-width="3"/>
</svg>
<svg style="left:205px;top:54px" width="24" height="24" viewBox="0 0 24 24">
<path d="M7.3 17 A6.3 6.3 0 1 0 8 8.5" fill="none" stroke="#5a50b0" stroke-width="2"/>
<path d="M3.2 10.5 L9.5 9 L7 14 Z" fill="#5a50b0"/>
</svg>
<svg style="left:426px;top:54px" width="28" height="26" viewBox="0 0 28 26">
<rect x="4.2" y="3.2" width="15" height="15.8" fill="#dff4ff" stroke="#4a78c8" stroke-width="1"/>
<rect x="4.2" y="3.2" width="15" height="2.6" fill="#4a78c8"/>
<path d="M4.5 9.5 H19 M4.5 13.5 H19 M11.5 5.5 V19" stroke="#4a78c8" stroke-width="0.9"/>
<g transform="translate(16.8,14.8)">
<path d="M-1.3 -6 L1.3 -6 L1.8 -4.3 L3.6 -5.2 L5.3 -3.3 L4.3 -1.6 L6 -1.2 L6 1.3 L4.3 1.7 L5.2 3.5 L3.4 5.3 L1.7 4.3 L1.3 6 L-1.3 6 L-1.7 4.3 L-3.5 5.2 L-5.3 3.4 L-4.3 1.7 L-6 1.3 L-6 -1.3 L-4.3 -1.7 L-5.2 -3.5 L-3.4 -5.3 L-1.7 -4.3 Z" fill="#f4b848" stroke="#c88820" stroke-width="0.7"/>
<circle r="2.2" fill="#dde8f0" stroke="#906020" stroke-width="0.9"/>
</g>
</svg>
<svg style="left:458px;top:54px" width="54" height="26" viewBox="0 0 54 26">
<path d="M8.5 12.5 V17.5 H11" fill="none" stroke="#4a68a8" stroke-width="1"/>
<rect x="4.5" y="4.5" width="8" height="8" fill="url(#gDoc)" stroke="#4a5ca0" stroke-width="1"/>
<path d="M6.5 8.5 H10.5 M8.5 6.5 V10.5" stroke="#d05020" stroke-width="1"/>
<path d="M10.5 12.5 H16 L17 13.5 H22.5 V21.5 H10.5 Z" fill="url(#gFold)" stroke="#c08830" stroke-width="0.9"/>
<path d="M12.5 15.5 H21.5" stroke="#fff8e0" stroke-width="1.5"/>
<path d="M15 5.5 Q19 6 20.5 9.5" fill="none" stroke="#283880" stroke-width="1"/>
<path d="M18 9 L23 9 L20.5 12 Z" fill="#283880"/>
<path d="M34.5 12.5 V17.5 H37" fill="none" stroke="#4a68a8" stroke-width="1"/>
<rect x="30.5" y="4.5" width="8" height="8" fill="url(#gDoc)" stroke="#4a5ca0" stroke-width="1"/>
<path d="M32.5 8.5 H36.5" stroke="#d05020" stroke-width="1"/>
<path d="M36.5 12.5 H41 L42 13.5 H48 V21.5 H36.5 Z" fill="url(#gFold)" stroke="#c08830" stroke-width="0.9"/>
<path d="M47 11 Q47 7 43 5.5" fill="none" stroke="#283880" stroke-width="1"/>
<path d="M40.3 5.5 L43.5 3.3 L43.5 8 Z" fill="#283880"/>
</svg>
<svg style="left:36px;top:104px" width="40" height="40" viewBox="0 0 40 40">
<polygon points="11,12 34.5,15 26.5,32.5 5,25" fill="url(#gDoc)" stroke="#30406c" stroke-width="0.9"/>
<path d="M27.5 17.5 H31.5 M26.5 20 H30.5" stroke="#5070a0" stroke-width="0.8"/>
<ellipse cx="20.5" cy="27.5" rx="2.6" ry="1.8" fill="none" stroke="#5a78b8" stroke-width="0.9"/>
<path d="M8 12.2 L16.2 8 L15.5 10.5 L25.8 13.2 L24.6 17.2 L14.2 14.3 L11.8 16.5 Z" fill="url(#gBlue)" stroke="#3c58a8" stroke-width="0.7"/>
<path d="M18.2 20.6 L29.8 23.4 L31.2 21.6 L36 29 L28.3 31.2 L29.2 28.3 L17.4 25.2 Z" fill="url(#gOr)" stroke="#b84008" stroke-width="0.6"/>
</svg>
<svg style="left:36px;top:164px" width="40" height="40" viewBox="0 0 40 40">
<polygon points="4,16.5 16.5,4.8 34,8.5 33.8,10.5 21.5,22 10.5,20.8" fill="url(#gOrL)" stroke="#c05010" stroke-width="0.7"/>
<path d="M4 16.5 L16.5 4.8 L19.5 5.5 L7.5 17.5 L10.5 20.8 Z" fill="#d8581a" stroke="#b04010" stroke-width="0.6"/>
<path d="M8.5 18.5 L20 7.2" stroke="#fff0d0" stroke-width="1.2"/>
<polygon points="10,24.5 23,10.5 35.5,14.5 25.5,31" fill="url(#gDoc)" stroke="#2c4c8c" stroke-width="0.9"/>
<polygon points="14,18.5 22,10 28.5,12 20,20.5" fill="#f4f4f8" stroke="#b0b8d0" stroke-width="0.5"/>
<path d="M19.5 14.5 H25 M18 16.5 H23.5 M27.5 17 H31.5 M26.5 19.5 H30.5 M25.5 22 H29.5" stroke="#6a88b8" stroke-width="0.7"/>
<circle cx="22.8" cy="25" r="2.8" fill="#88a8e8" stroke="#3a60b0" stroke-width="1"/>
</svg>
<svg style="left:38px;top:222px" width="36" height="36" viewBox="0 0 36 36"><rect x="0.5" y="0.5" width="35" height="35" rx="2" fill="#bebbb3" stroke="#a4a199"/></svg>
<svg style="left:36px;top:220px" width="40" height="40" viewBox="0 0 40 40">
<path d="M17.5 30 Q17.5 17 26.5 17 Q35 17 34.5 28.5 Q34 30.5 30 30.5 Z" fill="url(#gBodyO)" stroke="#a83808" stroke-width="0.7"/>
<path d="M22.5 17.5 L26.5 21.5 L30.5 17.5 Z" fill="#fff0e0"/>
<circle cx="25.8" cy="11.5" r="6.2" fill="url(#gFace)" stroke="#c08050" stroke-width="0.4"/>
<path d="M19.3 12 Q19 4.2 26 4.2 Q32.8 4.5 32.2 12.5 L31 15.5 L30.2 9.8 Q25.5 9.2 20.8 10.5 L20 14 Z" fill="#7a2a12"/>
<path d="M3.8 33 Q3.5 21 13 21 Q22.5 21 22.2 32.5 Q21.5 34.8 13 34.8 Q4.5 34.8 3.8 33 Z" fill="url(#gBodyB)" stroke="#3a5ab0" stroke-width="0.7"/>
<path d="M9.5 21.5 L12.8 30 L16 21.5 Z" fill="#eef4ff"/>
<circle cx="12.8" cy="15.8" r="6" fill="url(#gFace)" stroke="#c08050" stroke-width="0.4"/>
<path d="M6.6 16 Q6.2 8.8 12.8 8.8 Q19.5 9 19 16.5 L18 13.5 Q13.5 12.5 8 14 L7.5 17.5 Z" fill="#c44a1a"/>
</svg>
<svg style="left:36px;top:278px" width="40" height="40" viewBox="0 0 40 40">
<path d="M4.3 27 L26 15 L35.6 16.5 L34.2 21.5 L22.5 32.5 L6 29 Z" fill="url(#gOr)" stroke="#c04810" stroke-width="0.7"/>
<polygon points="8.5,26.5 20,17 30,16.8 22,29.5" fill="#c8e0f8" stroke="#5a7ab0" stroke-width="0.5"/>
<path d="M12.5 25.5 L22 19 M14.5 27 L24 20.5 M16.5 28.5 L26 22" stroke="#7a98c8" stroke-width="0.7"/>
<polygon points="4.3,26 14,12.5 29.8,6.3 19.8,19.5" fill="url(#gOrL)" stroke="#e89840" stroke-width="0.6"/>
<path d="M19.8 19.5 L29.8 6.3" stroke="#fff0c8" stroke-width="0.9"/>
</svg>
<svg style="left:796px;top:748px" width="20" height="18" viewBox="0 0 20 18">
<path d="M5 8 Q5 4 8.5 4 Q11.5 3.8 12.3 5.5 L11.5 7.2 L9.5 8.5 L8.2 10.5 L7.8 12 L6.5 11.5 Q5 10.5 5 8 Z" fill="#000"/>
<path d="M11.6 6.8 L13.6 8.8 L12.8 10.3 L12 12 L11.3 13.6 L7.8 13.8 M6.3 13.8 L7.6 11" fill="none" stroke="#111" stroke-width="1"/>
</svg>
</body></html>
